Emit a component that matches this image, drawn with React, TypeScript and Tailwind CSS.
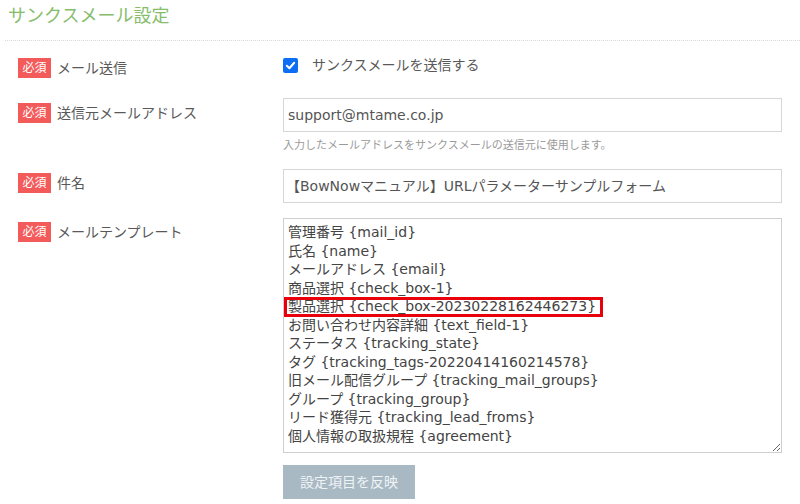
import React from "react";

const font = { fontFamily: '"DejaVu Sans", "Noto Sans CJK JP", sans-serif' };

function Badge() {
  return (
    <span className="inline-flex h-[20px] w-[33px] shrink-0 items-center justify-center bg-[#f35b5b] text-[12px] leading-none text-white">
      必須
    </span>
  );
}

function Label({ text }: { text: string }) {
  return (
    <div className="flex w-[265px] shrink-0 items-center gap-[6px]">
      <Badge />
      <span className="text-[14px] leading-[20px] text-[#595959]">{text}</span>
    </div>
  );
}

const lines = [
  "管理番号 {mail_id}",
  "氏名 {name}",
  "メールアドレス {email}",
  "商品選択 {check_box-1}",
  "製品選択 {check_box-20230228162446273}",
  "お問い合わせ内容詳細 {text_field-1}",
  "ステータス {tracking_state}",
  "タグ {tracking_tags-20220414160214578}",
  "旧メール配信グループ {tracking_mail_groups}",
  "グループ {tracking_group}",
  "リード獲得元 {tracking_lead_froms}",
  "個人情報の取扱規程 {agreement}",
];

export default function App() {
  return (
    <div className="h-[504px] w-[800px] overflow-hidden bg-white" style={font}>
      <div className="ml-[5px] h-[41px] border-b border-dotted border-[#d9d9d9] pl-[3px] pt-[4px]">
        <h1 className="text-[18px] leading-[24px] text-[#86bd6b]">サンクスメール設定</h1>
      </div>

      <div className="flex flex-col pl-[18px]">
        {/* Row 1 */}
        <div className="mt-[17px] flex items-start">
          <Label text="メール送信" />
          <div className="flex items-center gap-[14px]">
            <span className="flex h-[15px] w-[15px] items-center justify-center rounded-[2px] bg-[#0b6ef3]">
              <svg width="11" height="11" viewBox="0 0 12 12">
                <path d="M2 6.3 L4.8 9 L10 3" fill="none" stroke="white" strokeWidth="2.2" strokeLinecap="round" strokeLinejoin="round" />
              </svg>
            </span>
            <span className="text-[14px] leading-[15px] text-[#595959]">サンクスメールを送信する</span>
          </div>
        </div>

        {/* Row 2 */}
        <div className="mt-[20px] flex items-start">
          <div className="pt-[5px]">
            <Label text="送信元メールアドレス" />
          </div>
          <div className="flex flex-col">
            <div className="flex h-[34px] w-[499px] items-center border border-[#d6d6d6] pl-[4px] text-[14px] text-[#555]">
              support@mtame.co.jp
            </div>
            <div className="mt-[6px] text-[11px] leading-[16px] text-[#9a9a9a]">
              入力したメールアドレスをサンクスメールの送信元に使用します。
            </div>
          </div>
        </div>

        {/* Row 3 */}
        <div className="mt-[15px] flex items-start">
          <div className="pt-[4px]">
            <Label text="件名" />
          </div>
          <div className="flex h-[34px] w-[499px] items-center border border-[#d6d6d6] pl-[2px] text-[14px] text-[#555]">
            【BowNowマニュアル】URLパラメーターサンプルフォーム
          </div>
        </div>

        {/* Row 4 */}
        <div className="mt-[15px] flex items-start">
          <div className="pt-[4px]">
            <Label text="メールテンプレート" />
          </div>
          <div className="flex flex-col">
            <div className="relative">
              <textarea
                readOnly
                value={lines.join("\n")}
                className="block h-[235px] w-[499px] resize border border-[#cfcfcf] px-[4px] pt-[4px] text-[14px] leading-[18.5px] text-[#444] outline-none"
                style={font}
              />
              <div className="pointer-events-none absolute left-[1px] top-[79px] h-[20px] w-[319px] border-[3px] border-[#e8000b]" />
            </div>
            <button className="mt-[12px] h-[34px] w-[132px] bg-[#a9b9c3] text-[14px] text-[#eef3f6]">
              設定項目を反映
            </button>
          </div>
        </div>
      </div>
    </div>
  );
}
